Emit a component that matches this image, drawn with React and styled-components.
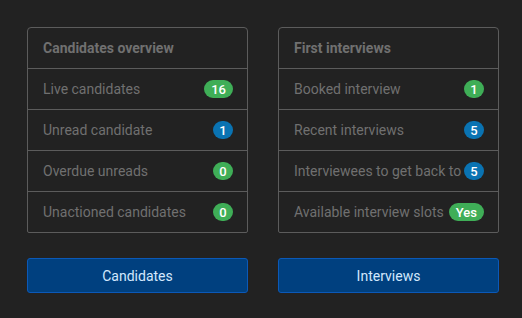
import styled, { createGlobalStyle } from "styled-components";

const GlobalStyle = createGlobalStyle`
  html, body {
    margin: 0;
    background: #222222;
    font-family: Roboto, "Noto Sans", sans-serif;
  }
`;

const Page = styled.div`
  display: grid;
  grid-template-columns: 221px 221px;
  column-gap: 30px;
  padding: 27px 0 0 27px;
`;

const Column = styled.div`
  display: flex;
  flex-direction: column;
  gap: 25px;
`;

const Card = styled.div`
  border: 1px solid #5c5c5c;
  border-radius: 4px 4px 2px 2px;
`;

const Row = styled.div`
  display: flex;
  align-items: center;
  justify-content: space-between;
  height: 40px;
  padding: 0 14px 0 15px;
  border-top: ${({ $first }) => ($first ? "none" : "1px solid #5c5c5c")};
  color: #707070;
  font-size: 14px;
  font-weight: ${({ $head }) => ($head ? 700 : 400)};
  white-space: nowrap;
`;

const Badge = styled.span`
  display: inline-flex;
  align-items: center;
  justify-content: center;
  min-width: ${({ $wide }) => ($wide ? "auto" : "20px")};
  height: 18px;
  padding: 0 ${({ $wide }) => ($wide ? "7px" : "6px")};
  box-sizing: border-box;
  border-radius: 9px;
  background: ${({ $tone }) => ($tone === "blue" ? "#0a73b2" : "#3fae57")};
  color: #ffffff;
  font-size: 13px;
  font-weight: 500;
`;

const Button = styled.button`
  height: 35px;
  border: 1px solid #0b59b8;
  border-radius: 3px;
  background: #00407f;
  color: #d3e8fd;
  font-family: Roboto, "Noto Sans", sans-serif;
  font-size: 14px;
  font-weight: 400;
  cursor: pointer;
`;

const panels = [
  {
    title: "Candidates overview",
    button: "Candidates",
    rows: [
      ["Live candidates", "16", "green"],
      ["Unread candidate", "1", "blue"],
      ["Overdue unreads", "0", "green"],
      ["Unactioned candidates", "0", "green"],
    ],
  },
  {
    title: "First interviews",
    button: "Interviews",
    rows: [
      ["Booked interview", "1", "green"],
      ["Recent interviews", "5", "blue"],
      ["Interviewees to get back to", "5", "blue"],
      ["Available interview slots", "Yes", "green"],
    ],
  },
];

const App = () => {
  return (
    <>
      <GlobalStyle />
      <Page>
        {panels.map((p) => (
          <Column key={p.title}>
            <Card>
              <Row $first $head>{p.title}</Row>
              {p.rows.map(([label, value, tone]) => (
                <Row key={label}>
                  {label}
                  <Badge $tone={tone} $wide={value.length > 1}>{value}</Badge>
                </Row>
              ))}
            </Card>
            <Button>{p.button}</Button>
          </Column>
        ))}
      </Page>
    </>
  );
};

export default App;
